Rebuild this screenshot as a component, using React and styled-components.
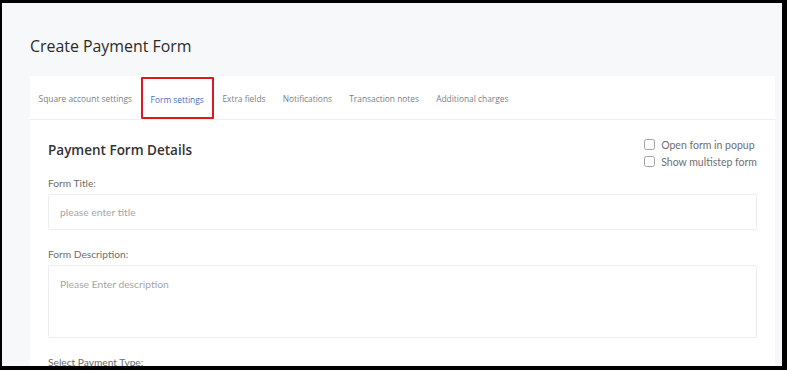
import styled, { createGlobalStyle } from "styled-components";

const GlobalStyle = createGlobalStyle`
  html, body { margin: 0; padding: 0; background: #000; }
  * { box-sizing: border-box; }
`;

const tabs = [
  "Square account settings",
  "Form settings",
  "Extra fields",
  "Notifications",
  "Transaction notes",
  "Additional charges",
];

const App = () => {
  return (
    <>
      <GlobalStyle />
      <Frame>
        <Page>
          <Title>Create Payment Form</Title>
          <Card>
            <TabBar>
              {tabs.map((t) => (
                <Tab key={t} $active={t === "Form settings"}>
                  {t}
                </Tab>
              ))}
            </TabBar>
            <Body>
              <HeadRow>
                <Heading>Payment Form Details</Heading>
                <Options>
                  <Option>
                    <Box />
                    Open form in popup
                  </Option>
                  <Option>
                    <Box />
                    Show multistep form
                  </Option>
                </Options>
              </HeadRow>
              <Label>Form Title:</Label>
              <Input placeholder="please enter title" />
              <Label>Form Description:</Label>
              <Area placeholder="Please Enter description" />
              <Label>Select Payment Type:</Label>
            </Body>
          </Card>
        </Page>
      </Frame>
    </>
  );
};

const Frame = styled.div`
  width: 787px;
  height: 370px;
  border-style: solid;
  border-color: #000;
  border-width: 3px 5px 4px 2px;
  overflow: hidden;
  background: #f7f8fa;
`;

const Page = styled.div`
  padding: 32px 7px 0 28px;
`;

const Title = styled.h1`
  margin: 0 0 19px 0;
  font-family: "Open Sans", sans-serif;
  font-weight: 400;
  font-size: 15.9px;
  line-height: 22px;
  color: #2b2b2b;
`;

const Card = styled.div`
  background: #fff;
`;

const TabBar = styled.div`
  display: flex;
  height: 44px;
  border-bottom: 1px solid #eeeff2;
`;

const Tab = styled.div`
  display: flex;
  align-items: center;
  padding: 0 ${({ $active }) => ($active ? "8px" : "8.6px")};
  padding-top: 2px;
  font-family: "Open Sans", sans-serif;
  font-size: 8.4px;
  color: ${({ $active }) => ($active ? "#4a6cc4" : "#7b7f86")};
  border: ${({ $active }) => ($active ? "2.5px solid #dc1820" : "none")};
  border-radius: 1px;
  margin-top: ${({ $active }) => ($active ? "1px" : "0")};
  white-space: nowrap;
`;

const Body = styled.div`
  padding: 16px 18px 0 18px;
`;

const HeadRow = styled.div`
  display: flex;
  justify-content: space-between;
  align-items: flex-start;
  margin-bottom: 6px;
`;

const Heading = styled.h2`
  margin: 5px 0 0 0;
  font-family: "Open Sans", sans-serif;
  font-weight: 600;
  font-size: 13.5px;
  line-height: 18px;
  color: #333;
`;

const Options = styled.div`
  display: flex;
  flex-direction: column;
  padding-top: 0;
`;

const Option = styled.label`
  display: flex;
  align-items: center;
  gap: 6px;
  height: 17px;
  font-family: Lato, sans-serif;
  font-size: 10.5px;
  color: #6f6f6f;
`;

const Box = styled.span`
  width: 11px;
  height: 11px;
  border: 1px solid #a3a3a3;
  border-radius: 2.5px;
  background: #fff;
`;

const Label = styled.div`
  font-family: Lato, sans-serif;
  font-size: 10.2px;
  line-height: 14px;
  color: #6d6d6d;
  margin-bottom: 4px;
`;

const Input = styled.input`
  display: block;
  width: 100%;
  height: 36px;
  margin: 0 0 17px 0;
  padding: 0 11px;
  border: 1px solid #eceef1;
  border-radius: 2px;
  font-family: Lato, sans-serif;
  font-size: 10.3px;
  outline: none;
  &::placeholder { color: #a6a6a6; }
`;

const Area = styled.textarea`
  display: block;
  width: 100%;
  height: 73px;
  margin: 0 0 17px 0;
  padding: 12px 11px;
  border: 1px solid #eceef1;
  border-radius: 2px;
  font-family: Lato, sans-serif;
  font-size: 10.3px;
  resize: none;
  outline: none;
  &::placeholder { color: #a6a6a6; }
`;

export default App;
